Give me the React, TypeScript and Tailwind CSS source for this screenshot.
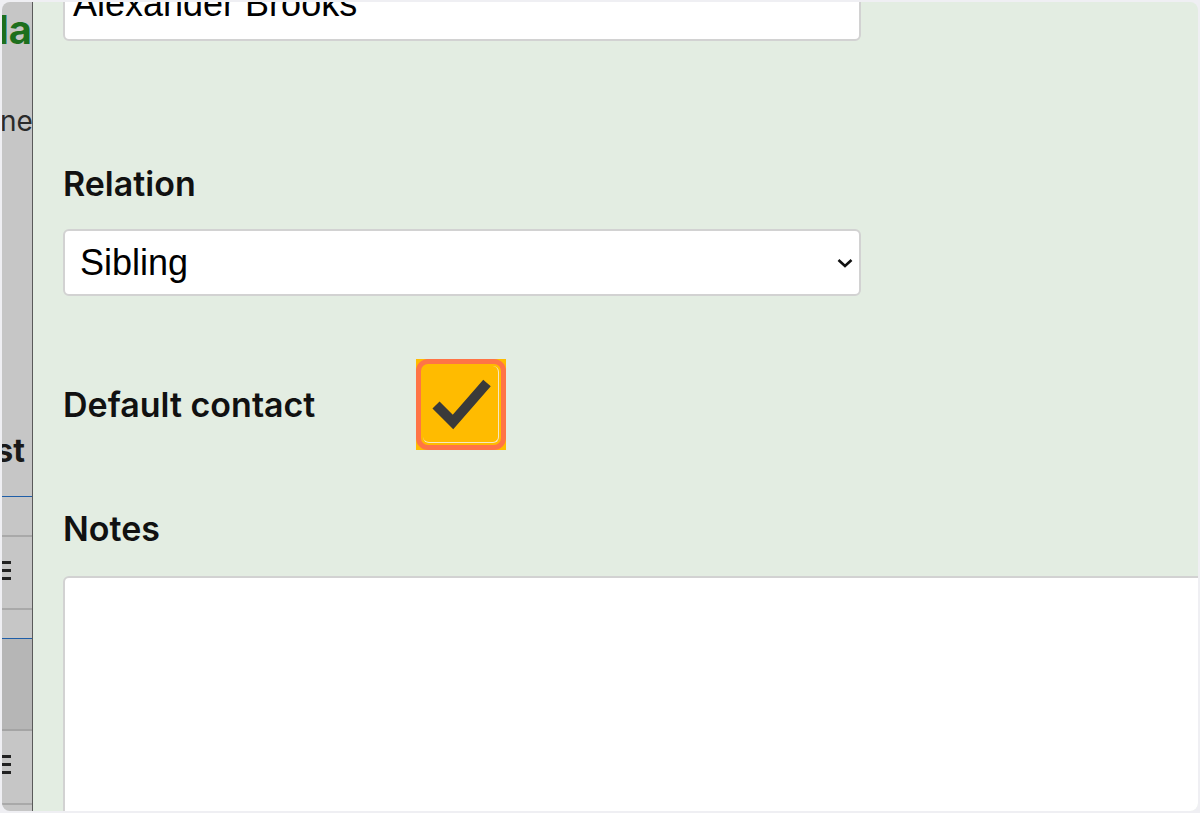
import React from "react";

/**
 * Contact edit panel (cropped view).
 * Left: clipped sidebar strip from the list behind. Right: the green form panel.
 */

const labelFont = { fontFamily: "Inter, 'Noto Sans', sans-serif" };
const fieldFont = { fontFamily: "'Liberation Sans', Arial, sans-serif" };

function MenuBars() {
  return (
    <div className="flex flex-col gap-[5px]">
      <div className="h-[3px] w-[9px] bg-[#222]" />
      <div className="h-[3px] w-[9px] bg-[#222]" />
      <div className="h-[3px] w-[9px] bg-[#222]" />
    </div>
  );
}

function SideStrip() {
  return (
    <div className="flex w-[31px] shrink-0 flex-col overflow-hidden border-r border-[#5a5a5a] bg-[#c6c6c6]">
      <div className="flex h-[58px] shrink-0 justify-end overflow-hidden pt-[4px]">
        <span
          className="whitespace-nowrap text-[40px] font-bold leading-[48px] text-[#1d6f1d]"
          style={labelFont}
        >
          Pla
        </span>
      </div>
      <div className="h-[43px] shrink-0" />
      <div
        className="ml-[-2px] h-[36px] shrink-0 whitespace-nowrap text-[28px] leading-[36px] text-[#2a2a2a]"
        style={labelFont}
      >
        necessary
      </div>
      <div className="h-[293px] shrink-0" />
      <div className="flex h-[38px] shrink-0 justify-end overflow-hidden pr-[7px]">
        <span
          className="whitespace-nowrap text-[32px] font-bold leading-[38px] text-[#1a1a1a]"
          style={labelFont}
        >
          List
        </span>
      </div>
      <div className="h-[26px] shrink-0" />
      <div className="h-[1px] shrink-0 bg-[#1f5ea8]" />
      <div className="h-[38px] shrink-0" />
      <div className="h-[2px] shrink-0 bg-[#a9a9a9]" />
      <div className="flex h-[71px] shrink-0 items-center pb-[4px]">
        <MenuBars />
      </div>
      <div className="h-[2px] shrink-0 bg-[#a9a9a9]" />
      <div className="h-[28px] shrink-0" />
      <div className="h-[1px] shrink-0 bg-[#1f5ea8]" />
      <div className="h-[90px] shrink-0 bg-[#b6b6b6]" />
      <div className="h-[2px] shrink-0 bg-[#a4a4a4]" />
      <div className="flex h-[72px] shrink-0 items-center pb-[6px]">
        <MenuBars />
      </div>
      <div className="h-[2px] shrink-0 bg-[#a9a9a9]" />
      <div className="flex-1" />
    </div>
  );
}

function CheckedBox() {
  return (
    <div className="h-[91px] w-[90px] shrink-0 bg-[#ffbb00]">
      <div className="relative h-full w-full rounded-[12px] border-[5px] border-[#ff7446]">
        <div className="absolute inset-[2px] rounded-[6px] border-b border-r border-[#f6e7c4]" />
        <svg
          className="absolute left-[-5px] top-[-5px]"
          width="90"
          height="91"
          viewBox="0 0 90 91"
        >
          <path
            d="M20 46 L37 63 L71 24"
            fill="none"
            stroke="#3a3a3a"
            strokeWidth="10"
            strokeLinecap="butt"
            strokeLinejoin="miter"
          />
        </svg>
      </div>
    </div>
  );
}

function FormPanel() {
  return (
    <div className="flex min-w-0 flex-1 flex-col overflow-hidden bg-[#e3ede2] pl-[30px]">
      <div
        className="mt-[-28px] flex h-[67px] w-[798px] shrink-0 items-center rounded-[6px] border-2 border-[#d2d2d2] bg-white pb-[8px] pl-[8px] text-[36px] text-black"
        style={fieldFont}
      >
        Alexander Brooks
      </div>

      <div
        className="mt-[123px] text-[34px] font-semibold leading-[40px] text-[#111]"
        style={labelFont}
      >
        Relation
      </div>

      <div
        className="mt-[25px] flex h-[67px] w-[798px] shrink-0 items-center justify-between rounded-[6px] border-2 border-[#d2d2d2] bg-white pl-[15px] pr-[6px] text-[36px] text-black"
        style={fieldFont}
      >
        <span>Sibling</span>
        <svg width="16" height="10" viewBox="0 0 16 10">
          <path d="M1.5 2 L8 8 L14.5 2" fill="none" stroke="#111" strokeWidth="2.6" />
        </svg>
      </div>

      <div className="mt-[63px] flex h-[91px] shrink-0 items-center">
        <div
          className="w-[353px] shrink-0 text-[34px] font-semibold leading-[40px] text-[#111]"
          style={labelFont}
        >
          Default contact
        </div>
        <CheckedBox />
      </div>

      <div
        className="mt-[59px] text-[34px] font-semibold leading-[40px] text-[#111]"
        style={labelFont}
      >
        Notes
      </div>

      <div className="mt-[27px] h-[300px] w-[1200px] shrink-0 rounded-[6px] border-2 border-[#d2d2d2] bg-white" />
    </div>
  );
}

export default function App() {
  return (
    <div className="h-[813px] w-[1200px] bg-[#efeff3] p-[2px]">
      <div className="flex h-[809px] overflow-hidden rounded-[8px]">
        <SideStrip />
        <FormPanel />
      </div>
    </div>
  );
}
